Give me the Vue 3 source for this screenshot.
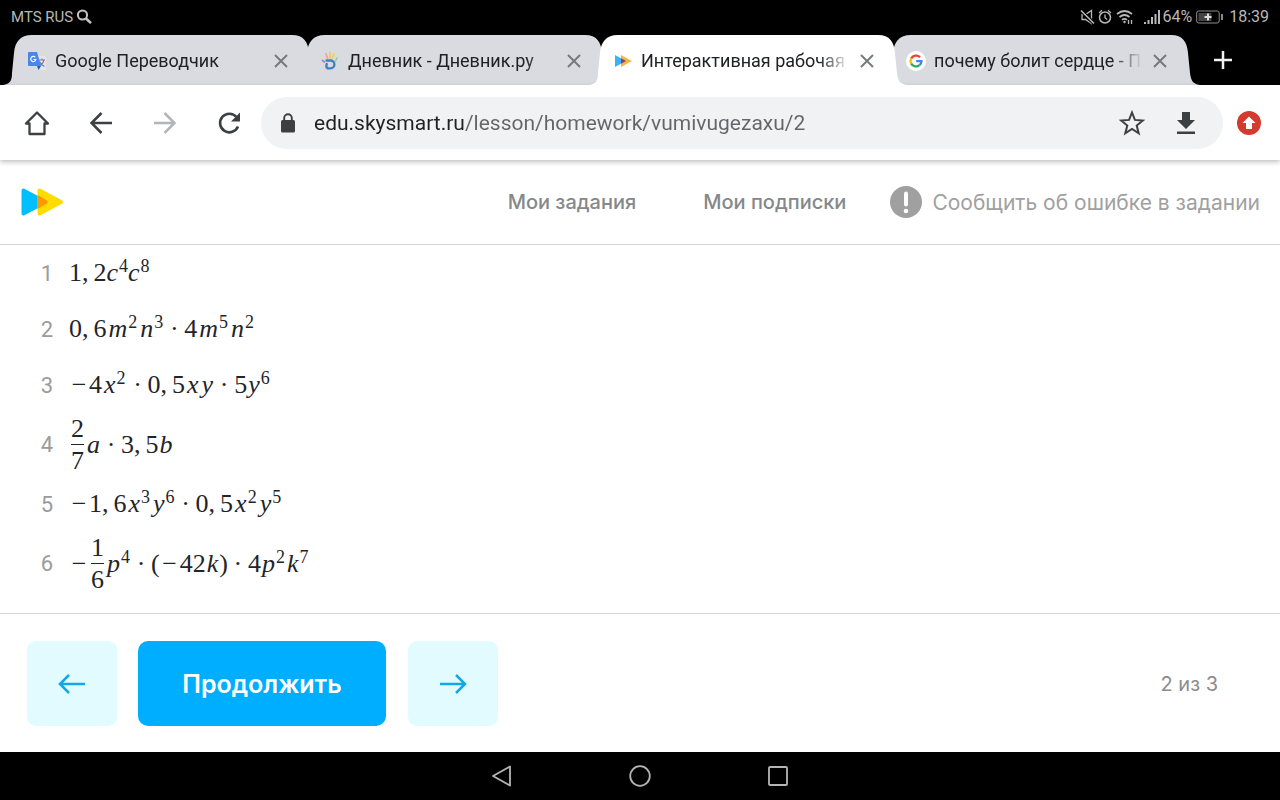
<template>
  <div class="device">
    <div class="status-bar">
      <div class="status-group carrier">
        <span>MTS RUS</span>
        <svg width="16" height="16" viewBox="0 0 16 16" fill="none" stroke="#c4c4c4" stroke-width="2">
          <circle cx="6.5" cy="6" r="4.6" />
          <path d="M10 9.5l5 4.6" stroke-width="2.6" />
        </svg>
      </div>
      <div class="status-group">
        <svg width="61" height="18" viewBox="0 0 61 18" fill="none" stroke="#b8b8b8" stroke-width="1.3">
          <path d="M3 6.5h3.5l6-4v13l-6-4H3z" />
          <path d="M2 2.5l13 13" stroke="#000" stroke-width="3.5" />
          <path d="M2 2.5l13 13" stroke-width="1.6" />
          <circle cx="26" cy="9.5" r="5.5" stroke-width="1.5" />
          <path d="M26 6.5v3.2l2.2 1.8M20 5l3-2.7M32 5l-3-2.7" />
          <path d="M38 6q7.5-6 15 0M40.500 9q5-4 10 0M43 11.800q2.500-2 5 0" stroke-width="1.700" />
          <circle cx="45.500" cy="14" r="1.200" fill="#b8b8b8" stroke="none" />
          <path d="M49.500 12v4M52.500 12v4" />
        </svg>
        <svg class="signal" width="16" height="16" viewBox="0 0 16 16" stroke="#b8b8b8" stroke-width="2">
          <path d="M1 15v-2M4.500 15v-4M8 15V8M11.500 15V5M15 15V1" />
        </svg>
        <span>64%</span>
        <svg class="battery" width="27" height="14" viewBox="0 0 27 14" fill="none">
          <rect x=".7" y="1" width="22.500" height="12" rx="2" stroke="#8f8f8f" />
          <rect x="2.500" y="3" width="13" height="8" fill="#444" />
          <path d="M12 3.500v7M8.500 7h7" stroke="#ddd" stroke-width="2" />
          <path d="M26 4v6" stroke="#b8b8b8" stroke-width="1.500" />
        </svg>
        <span>18:39</span>
      </div>
    </div>

    <div class="tabs">
      <div v-for="tab in tabs" :key="tab.icon" class="tab" :class="{ active: tab.active }">
        <svg class="tab-shape" viewBox="0 0 318 50" preserveAspectRatio="none">
          <path d="M0 50C7 49 9 46 9 38L11 18C12 7 17 0 29 0H289C301 0 305 7 306 18L308 38C309 46 311 49 318 50Z" />
        </svg>
        <svg v-if="tab.icon === 'translate'" class="favicon" viewBox="0 0 20 20">
          <path d="M9 5h9a1 1 0 0 1 1 1v12a1 1 0 0 1-1 1h-5z" fill="#e3e5e8" />
          <path d="M12 9h6M15 7.500V9M17 9q-1 4-5 6M13 11q1 3 4.500 4.500" fill="none" stroke="#6f8296" stroke-width="1.100" />
          <path d="M2 1h8l4 14H2a1 1 0 0 1-1-1V2a1 1 0 0 1 1-1z" fill="#4a86e8" />
          <path d="M10 15h4l-2.500 4z" fill="#2a56c0" />
          <path d="M8.300 6.300a2.600 2.600 0 1 0 .6 2.200H6.500" fill="none" stroke="#fff" stroke-width="1.200" />
        </svg>
        <svg v-else-if="tab.icon === 'diary'" class="favicon" viewBox="0 0 20 20" fill="none" stroke-linecap="round">
          <path d="M7.500 7L6 3" stroke="#f3a58a" stroke-width="1.900" />
          <path d="M10 7V1.500" stroke="#f3cb62" stroke-width="2" />
          <path d="M12.500 7L14 3" stroke="#efd070" stroke-width="1.900" />
          <path d="M15.500 10l1.500-3" stroke="#8fcf8f" stroke-width="1.600" />
          <path d="M4.500 11L2.500 9.500" stroke="#a184cf" stroke-width="1.800" />
          <path d="M6.500 9.500h4a3.900 3.900 0 0 1 0 7.800H7.500Q5.500 16 6.800 13" stroke="#3f7fc6" stroke-width="2.300" />
        </svg>
        <svg v-else-if="tab.icon === 'skysmart'" class="favicon" viewBox="0 0 20 20">
          <path d="M2 4l11 6-11 6z" fill="#3bb2f2" />
          <path d="M8 4l11 6-11 6z" fill="#f6b53c" />
          <path d="M8 7.300l5 2.700-5 2.700z" fill="#7b3d8f" />
        </svg>
        <svg v-else class="favicon" viewBox="0 0 20 20" fill="none" stroke-width="2.300">
          <circle cx="10" cy="10" r="10" fill="#fff" />
          <path d="M14 6.300A5.500 5.500 0 0 0 5.200 7.400" stroke="#ea4335" />
          <path d="M5.200 7.400a5.500 5.500 0 0 0 0 5.200" stroke="#fbbc05" />
          <path d="M5.200 12.600a5.500 5.500 0 0 0 8.300 1.600" stroke="#34a853" />
          <path d="M13.500 14.200A5.500 5.500 0 0 0 15.500 10.200H10.200" stroke="#4285f4" />
        </svg>
        <a href="#" class="tab-title">{{ tab.title }}</a>
        <button class="tab-close" aria-label="Закрыть вкладку">
          <svg width="14" height="14" viewBox="0 0 14 14" stroke="#77797c" stroke-width="2">
            <path d="M1 1l12 12M13 1L1 13" />
          </svg>
        </button>
      </div>
      <button class="new-tab" aria-label="Новая вкладка">
        <svg width="18" height="18" viewBox="0 0 18 18" stroke="#f1f1f1" stroke-width="2.500">
          <path d="M9 0v18M0 9h18" />
        </svg>
      </button>
    </div>

    <div class="toolbar">
      <button class="tool" aria-label="Домой">
        <svg width="26" height="26" viewBox="0 0 26 26" fill="none" stroke="#3c4043" stroke-width="2.300" stroke-linejoin="round">
          <path d="M2 13.500L13 2.500l11 11h-3.500V24h-15V13.500z" />
        </svg>
      </button>
      <button class="tool" aria-label="Назад">
        <svg width="24" height="24" viewBox="0 0 24 24" fill="none" stroke="#3c4043" stroke-width="2.500">
          <path d="M23 12H3M12.500 2L2.500 12l10 10" />
        </svg>
      </button>
      <button class="tool" aria-label="Вперёд">
        <svg width="24" height="24" viewBox="0 0 24 24" fill="none" stroke="#b4b5b7" stroke-width="2.500">
          <path d="M1 12h20M11.500 2l10 10-10 10" />
        </svg>
      </button>
      <button class="tool" aria-label="Обновить">
        <svg width="24" height="24" viewBox="0 0 24 24" fill="none" stroke="#3c4043" stroke-width="2.600">
          <path d="M19.500 6A9.300 9.300 0 1 0 21 15.500" />
          <path d="M23 1.500v9h-9z" fill="#3c4043" stroke="none" />
        </svg>
      </button>
      <div class="omnibox">
        <svg width="16" height="20" viewBox="0 0 16 20">
          <rect x="1" y="7" width="14" height="12.500" rx="1.500" fill="#3c4043" />
          <path d="M4.200 8V5a3.800 3.800 0 0 1 7.600 0v3" fill="none" stroke="#3c4043" stroke-width="1.900" />
        </svg>
        <input v-model="url" class="url" type="text" aria-label="Адрес страницы" />
        <button class="omni-button" aria-label="В закладки">
          <svg width="28" height="28" viewBox="0 0 28 28" fill="none" stroke="#3c4043" stroke-width="2">
            <path d="M14 3.500l2.900 7.400 7.900.6-6.100 5.100 2 7.700L14 20l-6.700 4.300 2-7.700-6.100-5.100 7.900-.6z" />
          </svg>
        </button>
        <button class="omni-button" aria-label="Скачать">
          <svg width="20" height="24" viewBox="0 0 20 24" fill="#3c4043">
            <path d="M6 1h8v8h5l-9 9-9-9h5zM1 20.500h18V23H1z" />
          </svg>
        </button>
      </div>
      <button class="update" aria-label="Обновить браузер">
        <svg width="24" height="24" viewBox="0 0 24 24">
          <circle cx="12" cy="12" r="12" fill="#d23b2e" />
          <path d="M12 5.500l6.500 6.500H15v6H9v-6H5.500z" fill="#fff" />
        </svg>
      </button>
    </div>

    <header class="header">
      <a href="#" class="logo" aria-label="Skysmart">
        <svg width="44" height="30" viewBox="0 0 44 30" stroke-linejoin="round" stroke-width="4">
          <path d="M3.500 3.500L25 15 3.500 26.500z" fill="#00bfff" stroke="#00bfff" />
          <path d="M19.500 3.500L41 15 19.500 26.500z" fill="#ffdc00" stroke="#ffdc00" />
          <path d="M17.500 8L27 13.500Q28.500 15 27 16.500L17.500 22z" fill="#ff9800" />
        </svg>
      </a>
      <nav class="menu">
        <a href="#">Мои задания</a>
        <a href="#">Мои подписки</a>
        <a href="#" class="report">
          <svg width="32" height="32" viewBox="0 0 32 32">
            <circle cx="16" cy="16" r="16" fill="#a0a0a0" />
            <path d="M16 7.500v11" stroke="#fff" stroke-width="4" stroke-linecap="round" />
            <circle cx="16" cy="25" r="2.300" fill="#fff" />
          </svg>
          Сообщить об ошибке в задании
        </a>
      </nav>
    </header>

    <main class="content">
      <ol class="tasks">
        <li v-for="(task, index) in tasks" :key="index" class="task">
          <span class="number">{{ index + 1 }}</span>
          <span class="formula">
            <template v-for="(part, i) in task" :key="i">
              <span v-if="part.frac" class="frac">
                <span class="numerator">{{ part.frac[0] }}</span>
                <span>{{ part.frac[1] }}</span>
              </span>
              <span v-else-if="part.v" class="variable" :class="'var-' + part.v"><i>{{ part.v }}</i><sup v-if="part.p">{{ part.p }}</sup></span>
              <span v-else-if="part.op" :class="part.op === '−' ? 'minus' : 'dot'">{{ part.op }}</span>
              <span v-else :class="{ comma: part.n === ',' }">{{ part.n }}</span>
            </template>
          </span>
        </li>
      </ol>
    </main>

    <footer class="footer">
      <button class="step" aria-label="Предыдущее">
        <svg width="28" height="20" viewBox="0 0 28 20" fill="none" stroke="#12a8e6" stroke-width="2.500">
          <path d="M27 10H2M11 1L2 10l9 9" />
        </svg>
      </button>
      <button class="continue">Продолжить</button>
      <button class="step" aria-label="Следующее">
        <svg width="28" height="20" viewBox="0 0 28 20" fill="none" stroke="#12a8e6" stroke-width="2.500">
          <path d="M1 10h25M17 1l9 9-9 9" />
        </svg>
      </button>
      <span class="counter">2 из 3</span>
    </footer>

    <div class="system-nav">
      <button aria-label="Системная кнопка назад">
        <svg width="22" height="22" viewBox="0 0 22 22" fill="none" stroke="#b5b5b5" stroke-width="1.800" stroke-linejoin="round">
          <path d="M19 1.500v19L2 11z" />
        </svg>
      </button>
      <button aria-label="Главный экран">
        <svg width="22" height="22" viewBox="0 0 22 22" fill="none" stroke="#b5b5b5" stroke-width="1.800">
          <circle cx="11" cy="11" r="9.800" />
        </svg>
      </button>
      <button aria-label="Недавние приложения">
        <svg width="22" height="22" viewBox="0 0 22 22" fill="none" stroke="#b5b5b5" stroke-width="1.800">
          <rect x="2" y="2" width="18" height="18" rx="1" />
        </svg>
      </button>
    </div>
  </div>
</template>

<script setup>
import { ref } from 'vue';

const url = ref('edu.skysmart.ru/lesson/homework/vumivugezaxu/2');

const tabs = [
  { icon: 'translate', title: 'Google Переводчик' },
  { icon: 'diary', title: 'Дневник - Дневник.ру' },
  { icon: 'skysmart', title: 'Интерактивная рабочая', active: true },
  { icon: 'google', title: 'почему болит сердце - П' }
];

// n - число, v - переменная, p - степень, op - знак
const num = (n) => ({ n });
const pow = (v, p) => ({ v, p });
const frac = (a, b) => ({ frac: [a, b] });
const dot = { op: '·' };
const minus = { op: '−' };
const comma = { n: ',' };

const tasks = [
  [num('1'), comma, num('2'), pow('c', 4), pow('c', 8)],
  [num('0'), comma, num('6'), pow('m', 2), pow('n', 3), dot, num('4'), pow('m', 5), pow('n', 2)],
  [minus, num('4'), pow('x', 2), dot, num('0'), comma, num('5'), pow('x'), pow('y'), dot, num('5'), pow('y', 6)],
  [frac(2, 7), pow('a'), dot, num('3'), comma, num('5'), pow('b')],
  [minus, num('1'), comma, num('6'), pow('x', 3), pow('y', 6), dot, num('0'), comma, num('5'), pow('x', 2), pow('y', 5)],
  [minus, frac(1, 6), pow('p', 4), dot, num('('), minus, num('42'), pow('k'), num(')'), dot, num('4'), pow('p', 2), pow('k', 7)]
];
</script>

<style>
body {
  margin: 0;
  background: #fff;
}
</style>

<style scoped>
.device {
  min-height: 100vh;
  display: flex;
  flex-direction: column;
  font-family: Roboto, sans-serif;
  color: #202124;
}

button {
  border: none;
  background: none;
  padding: 0;
  font: inherit;
  display: flex;
  align-items: center;
  justify-content: center;
  cursor: pointer;
}

a {
  color: inherit;
  text-decoration: none;
}

svg {
  flex-shrink: 0;
}

.status-bar {
  height: 35px;
  padding: 0 11px 2px;
  box-sizing: border-box;
  background: #000;
  color: #b8b8b8;
  font-size: 16px;
  display: flex;
  align-items: center;
  justify-content: space-between;
}

.status-group {
  display: flex;
  align-items: center;
}

.carrier {
  gap: 3px;
  font-size: 15px;
}

.signal {
  margin: 0 2px 0 4px;
}

.battery {
  margin: 0 6px 0 4px;
}

.tabs {
  height: 50px;
  padding-left: 3px;
  background: #000;
  display: flex;
}

.tab {
  position: relative;
  flex: 0 1 318px;
  min-width: 0;
  margin-right: -25px;
  padding: 1px 27px 0 24px;
  box-sizing: border-box;
  display: flex;
  align-items: center;
}

.tab-shape {
  position: absolute;
  top: 0;
  left: 0;
  width: 100%;
  height: 50px;
  fill: #dadbe0;
}

.tab.active {
  z-index: 1;
}

.active .tab-shape {
  fill: #fff;
}

.favicon {
  position: relative;
  width: 20px;
  height: 20px;
}

.tab-title {
  position: relative;
  flex: 1;
  min-width: 0;
  margin-left: 8px;
  overflow: hidden;
  white-space: nowrap;
  font-size: 18px;
  line-height: 24px;
  mask-image: linear-gradient(to right, #000 85%, transparent);
}

.tab-close {
  position: relative;
  width: 26px;
  height: 40px;
  margin-left: 4px;
}

.new-tab {
  width: 40px;
  margin-left: 28px;
}

.toolbar {
  position: relative;
  padding: 12px 5px 11px;
  background: #fff;
  box-shadow: 0 2px 5px rgba(0, 0, 0, 0.25);
  display: flex;
}

.tool {
  width: 64px;
}

.omnibox {
  flex: 1;
  height: 52px;
  padding: 0 10px 0 19px;
  border-radius: 26px;
  background: #f1f2f4;
  display: flex;
  align-items: center;
}

.url {
  flex: 1;
  min-width: 0;
  margin-left: 18px;
  padding: 0;
  border: none;
  outline: none;
  font: 21px/28px Roboto, sans-serif;
  color: transparent;
  background: linear-gradient(to right, #202124 151px, #636569 151px);
  background-clip: text;
}

.omni-button {
  width: 54px;
  height: 52px;
}

.update {
  width: 52px;
}

.header {
  padding: 0 20px;
  height: 84px;
  border-bottom: 1px solid #d5d5d5;
  display: flex;
  align-items: center;
  justify-content: space-between;
}

.logo {
  display: flex;
}

.menu {
  display: flex;
  align-items: center;
  font-family: Inter, sans-serif;
  font-size: 20px;
  font-weight: 500;
  color: #85888b;
}

.menu a + a {
  margin-left: 67px;
}

.menu .report {
  margin-left: 44px;
  display: flex;
  align-items: center;
  gap: 10px;
  font-size: 21px;
  font-weight: 400;
  color: #a0a0a0;
}

.content {
  flex: 1;
  padding-bottom: 12px;
}

.tasks {
  margin: 0;
  padding: 0 0 0 36px;
  list-style: none;
}

.task {
  min-height: 56px;
  display: flex;
  align-items: center;
}

.number {
  width: 17px;
  margin-right: 16px;
  text-align: right;
  font-size: 22px;
  color: #9b9b9b;
}

.formula {
  display: flex;
  align-items: center;
  font-family: "Liberation Serif", serif;
  font-size: 26px;
  line-height: 32px;
  color: #1f2528;
}

.comma {
  margin-right: 5px;
}

.variable {
  display: flex;
  padding: 0 1px;
}

.variable sup {
  margin-left: 1px;
  font-size: 18px;
  line-height: 18px;
}

.var-c {
  padding: 0;
}

.var-m,
.var-x {
  padding: 0 2px;
}

.minus {
  width: 20px;
  text-align: center;
}

.dot {
  width: 20px;
  text-align: center;
}

.frac {
  margin: 0 2px;
  display: flex;
  flex-direction: column;
  line-height: 31px;
  text-align: center;
}

.numerator {
  border-bottom: 1px solid #1f2528;
}

.footer {
  padding: 27px 62px 26px 27px;
  border-top: 1px solid #d5d5d5;
  display: flex;
  align-items: center;
  font-family: Inter, sans-serif;
}

.step {
  width: 90px;
  height: 85px;
  border-radius: 9px;
  background: #e2fbff;
}

.continue {
  width: 248px;
  height: 85px;
  margin: 0 22px 0 21px;
  border-radius: 10px;
  background: #00aeff;
  color: #fff;
  font-size: 25px;
  font-weight: 600;
}

.counter {
  margin-left: auto;
  font-size: 20px;
  color: #8c8c8c;
}

.system-nav {
  height: 48px;
  background: #000;
  display: flex;
  justify-content: center;
  gap: 92px;
}

.system-nav button {
  width: 46px;
}
</style>
